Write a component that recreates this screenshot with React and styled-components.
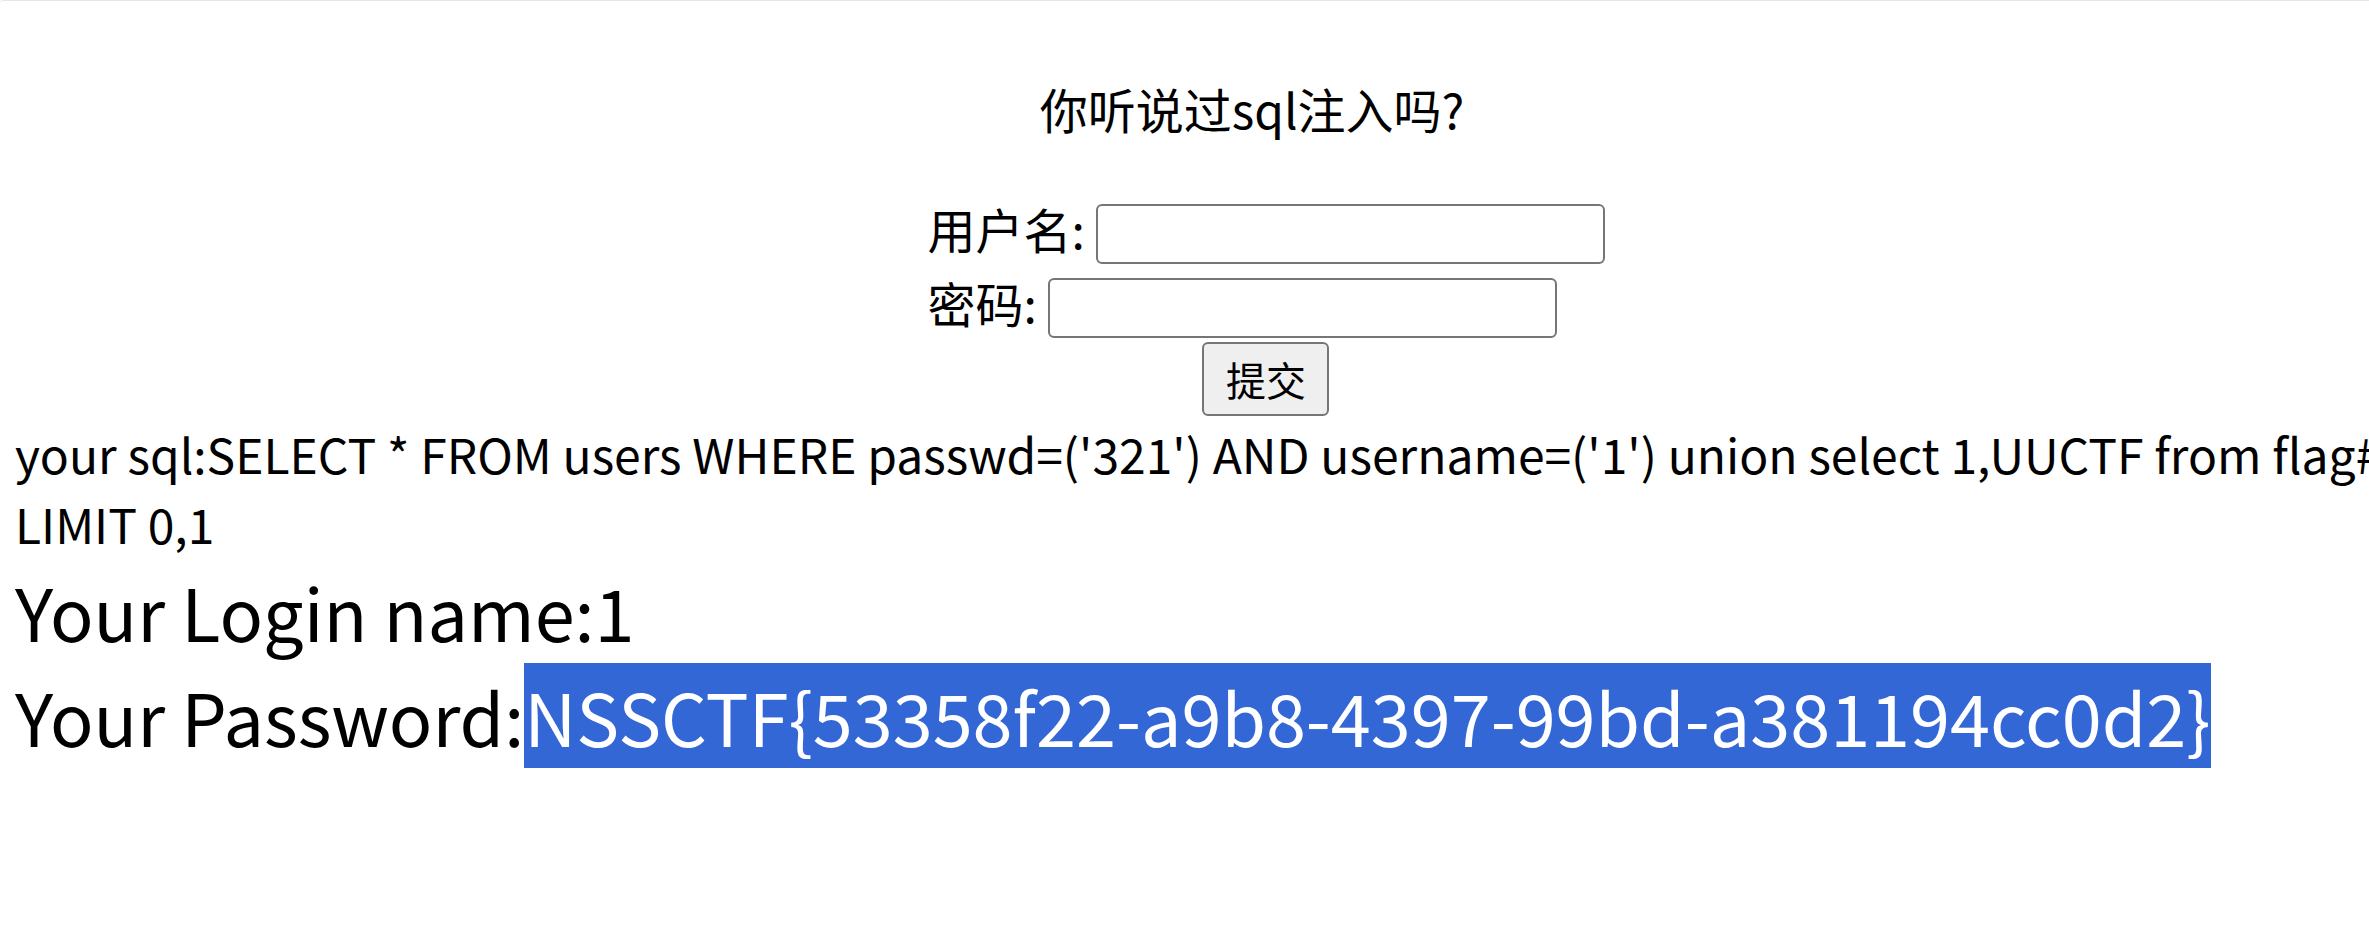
import React from "react";
import styled, { createGlobalStyle } from "styled-components";

const GlobalStyle = createGlobalStyle`
  html, body {
    margin: 0;
    padding: 0;
    background: #ffffff;
    overflow: hidden;
  }
  body {
    font-family: "Noto Sans CJK SC", "Noto Sans", sans-serif;
    color: #000000;
  }
`;

const Frame = styled.div`
  border-top: 1px solid #e6e6e6;
  border-radius: 3px 0 0 0;
  min-height: 932px;
`;

const Page = styled.main`
  width: 2474px;
  margin-left: 15px;
  padding-top: 72px;
  display: flex;
  flex-direction: column;
  font-family: "Noto Sans CJK SC", "Noto Sans", sans-serif;
`;

const Title = styled.div`
  font-size: 48px;
  line-height: normal;
  text-align: center;
`;

const Form = styled.form`
  align-self: center;
  margin: 50px 0 0 0;
  padding-left: 28px;
  display: flex;
  flex-direction: column;
  align-items: flex-start;
`;

const Row = styled.div`
  display: flex;
  align-items: flex-start;
  margin-top: ${(p) => p.$gap || 0}px;
`;

const Label = styled.label`
  font-size: 48px;
  line-height: normal;
  white-space: pre;
`;

const Input = styled.input`
  box-sizing: border-box;
  width: 509px;
  height: 60px;
  margin: 11px 0 0 0;
  padding: 3px 6px;
  border: 2px solid #767676;
  border-radius: 6px;
  background: #ffffff;
  font-family: "Noto Sans CJK SC", sans-serif;
  font-size: 40px;
  outline: none;
`;

const Submit = styled.button`
  align-self: center;
  box-sizing: border-box;
  width: 127px;
  height: 74px;
  margin-top: 4px;
  padding: 0;
  border: 2px solid #767676;
  border-radius: 6px;
  background: #efefef;
  color: #000000;
  font-family: "Noto Sans CJK SC", sans-serif;
  font-size: 40px;
  line-height: normal;
`;

const SqlText = styled.div`
  margin-top: 2px;
  font-size: 48px;
  line-height: normal;
`;

const Result = styled.div`
  font-size: 72px;
  line-height: normal;
`;

const Highlight = styled.span`
  background: #3367d6;
  color: #ffffff;
`;

export default function App() {
  return (
    <>
      <GlobalStyle />
      <Frame>
        <Page>
          <Title>你听说过sql注入吗?</Title>
          <Form onSubmit={(e) => e.preventDefault()}>
            <Row>
              <Label>用户名: </Label>
              <Input type="text" name="username" />
            </Row>
            <Row $gap={3}>
              <Label>密码: </Label>
              <Input type="password" name="password" />
            </Row>
            <Submit type="submit">提交</Submit>
          </Form>
          <SqlText>
            your sql:SELECT * FROM users WHERE passwd=('321') AND username=('1') union select 1,UUCTF from flag#') LIMIT 0,1
          </SqlText>
          <Result>
            Your Login name:1
            <br />
            Your Password:<Highlight>NSSCTF{"{"}53358f22-a9b8-4397-99bd-a381194cc0d2{"}"}</Highlight>
          </Result>
        </Page>
      </Frame>
    </>
  );
}
